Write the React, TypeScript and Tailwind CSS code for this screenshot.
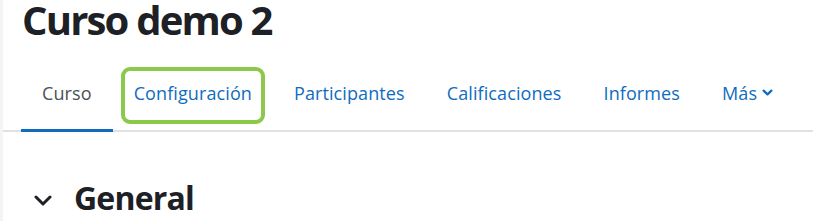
const tabs = [
  { label: "Curso", active: true },
  { label: "Configuración", highlight: true },
  { label: "Participantes" },
  { label: "Calificaciones" },
  { label: "Informes" },
  { label: "Más", menu: true },
];

function Chevron({ w, h, stroke }: { w: number; h: number; stroke: number }) {
  return (
    <svg width={w} height={h} viewBox={`0 0 ${w} ${h}`} fill="none">
      <polyline
        points={`${stroke / 2 + 0.5},${stroke / 2 + 0.5} ${w / 2},${h - stroke / 2 - 0.5} ${w - stroke / 2 - 0.5},${stroke / 2 + 0.5}`}
        stroke="currentColor"
        strokeWidth={stroke}
        strokeLinecap="round"
        strokeLinejoin="round"
      />
    </svg>
  );
}

export default function App() {
  return (
    <div
      className="w-[813px] h-[221px] overflow-hidden bg-white border-l-[3px] border-[#f4f4f4]"
      style={{ fontFamily: '"Open Sans", "Noto Sans", sans-serif' }}
    >
      <h1 className="pl-[19px] text-[40px] leading-[40px] font-bold text-[#1d2125] tracking-[-1.8px]">
        Curso demo 2
      </h1>

      <nav className="mt-[17px] border-b-2 border-[#dee2e6]">
        <ul className="flex pl-[18px]">
          {tabs.map((tab) => (
            <li key={tab.label} className="relative">
              <a
                href="#"
                className={`flex items-center gap-[5px] px-[21px] h-[75px] text-[18px] tracking-[0.1px] border-b-[3px] -mb-[2px] ${
                  tab.active
                    ? "text-[#495057] border-[#0f6cbf]"
                    : "text-[#0f6cbf] border-transparent"
                }`}
              >
                {tab.label}
                {tab.menu && (
                  <span className="mb-[2px]">
                    <Chevron w={11} h={7} stroke={2.2} />
                  </span>
                )}
              </a>
              {tab.highlight && (
                <span className="absolute left-[8px] right-[8px] top-[10px] bottom-[6px] rounded-[9px] border-[4px] border-[#8cc84b]" />
              )}
            </li>
          ))}
        </ul>
      </nav>

      <div className="flex items-center pl-[31px] mt-[48px] text-[#1d2125]">
        <span className="mt-[4px]">
          <Chevron w={18} h={11} stroke={3} />
        </span>
        <h3 className="ml-[22px] text-[32px] leading-[36px] font-bold tracking-[-0.8px]">
          General
        </h3>
      </div>
    </div>
  );
}
